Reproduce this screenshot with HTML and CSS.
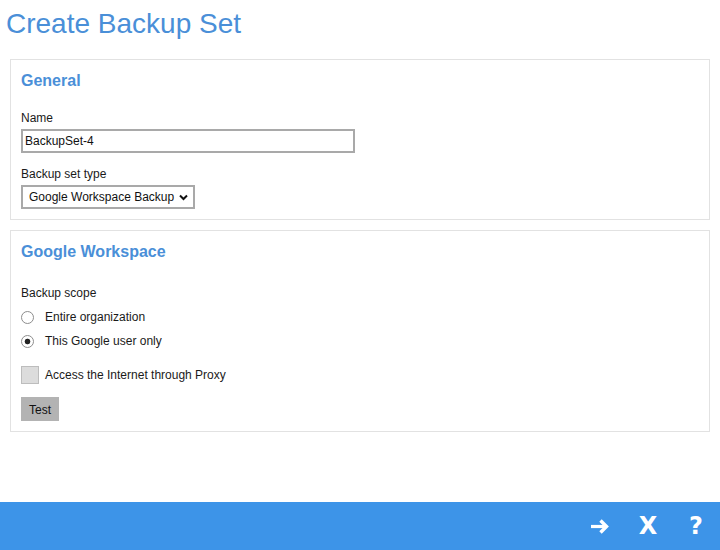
FILE: index.html
```html
<!DOCTYPE html>
<html lang="en">

<head>
    <meta charset="UTF-8">
    <meta name="viewport" content="width=device-width, initial-scale=1.0">
    <title>Create Backup Set</title>
    <link rel="stylesheet" href="styles.css">
</head>

<body>
    <div class="app">
        <div class="content">
            <h1 class="title">Create Backup Set</h1>

            <!-- general -->
            <div class="panel">
                <h3>General</h3>
                <label class="field-label" for="name">Name</label>
                <input type="text" id="name" class="text-input" value="BackupSet-4">
                <label class="field-label" for="type">Backup set type</label>
                <div class="select">
                    <select id="type">
                        <option>Google Workspace Backup</option>
                    </select>
                    <svg width="9" height="7" viewBox="0 0 9 7">
                        <polyline points="1,1.5 4.5,5 8,1.5" fill="none" stroke="#111" stroke-width="2" />
                    </svg>
                </div>
            </div>

            <!-- google workspace -->
            <div class="panel">
                <h3>Google Workspace</h3>
                <div class="field-label scope-label">Backup scope</div>
                <label class="check-row first">
                    <input type="radio" name="scope" class="radio">
                    <span>Entire organization</span>
                </label>
                <label class="check-row">
                    <input type="radio" name="scope" class="radio" checked>
                    <span>This Google user only</span>
                </label>
                <label class="check-row proxy">
                    <input type="checkbox" class="checkbox">
                    <span>Access the Internet through Proxy</span>
                </label>
                <button type="button" class="btn-test">Test</button>
            </div>
        </div>

        <!-- bottom bar -->
        <div class="footer">
            <span class="foot-icon">
                <svg width="20" height="15" viewBox="0 0 20 15">
                    <line x1="1" y1="7.5" x2="16" y2="7.5" stroke="#fff" stroke-width="3.2" />
                    <polyline points="10.5,1.5 16.5,7.5 10.5,13.5" fill="none" stroke="#fff" stroke-width="3.4" />
                </svg>
            </span>
            <span class="foot-icon">X</span>
            <span class="foot-icon">?</span>
        </div>
    </div>
</body>

</html>
```

FILE: styles.css
```css
* {
    box-sizing: border-box;
}

body {
    margin: 0;
    font-family: "Liberation Sans", Arial, sans-serif;
    font-size: 12px;
    color: #1a1a1a;
    background-color: #fff;
}

.app {
    display: flex;
    flex-direction: column;
    height: 100vh;
}

.title {
    margin: 8px 0 0 6px;
    font-size: 28px;
    line-height: 32px;
    font-weight: normal;
    color: #4a8fd8;
}

.panel {
    margin: 19px 10px 0;
    padding: 11px 10px 10px;
    border: 1px solid #e2e2e2;
}

.panel + .panel {
    margin-top: 10px;
}

h3 {
    margin: 0;
    font-size: 16px;
    line-height: 20px;
    color: #4a8fd8;
}

.field-label {
    display: block;
    margin-top: 19px;
    padding-top: 1px;
    line-height: 14px;
}

.field-label + .text-input,
.field-label + .select {
    margin-top: 4px;
}

.text-input + .field-label {
    margin-top: 13px;
}

.text-input {
    display: block;
    width: 334px;
    height: 24px;
    padding: 0 2px;
    border: 2px solid #a9a9a9;
    font-family: "Liberation Sans", Arial, sans-serif;
    font-size: 12px;
    color: #111;
    outline: none;
}

.select {
    display: flex;
    align-items: center;
    width: 174px;
    height: 24px;
    border: 2px solid #a9a9a9;
}

.select select {
    appearance: none;
    -webkit-appearance: none;
    border: none;
    background: none;
    padding: 0 0 0 6px;
    width: 153px;
    font-family: "Liberation Sans", Arial, sans-serif;
    font-size: 12px;
    color: #111;
    outline: none;
}

.select svg {
    margin-left: 3px;
}

.scope-label {
    margin-top: 23px;
}

.check-row {
    display: flex;
    align-items: center;
    gap: 11px;
    height: 24px;
    line-height: 14px;
}

.check-row.first {
    margin-top: 5px;
}

.check-row.proxy {
    margin-top: 10px;
    gap: 6px;
}

.radio {
    appearance: none;
    -webkit-appearance: none;
    width: 13px;
    height: 13px;
    margin: 0;
    border: 1px solid #8d8d8d;
    border-radius: 50%;
    background: #fff;
}

.radio:checked {
    background: radial-gradient(circle, #222 0, #222 2.5px, #fff 3.2px);
}

.checkbox {
    appearance: none;
    -webkit-appearance: none;
    width: 18px;
    height: 18px;
    margin: 0;
    border: 1px solid #bdbdbd;
    background: #dcdcdc;
}

.btn-test {
    display: block;
    margin-top: 10px;
    width: 38px;
    height: 24px;
    padding: 1px 0 0;
    border: none;
    background-color: #b3b3b3;
    font-family: "Liberation Sans", Arial, sans-serif;
    font-size: 12px;
    color: #111;
}

.footer {
    margin-top: auto;
    height: 48px;
    display: flex;
    justify-content: flex-end;
    align-items: center;
    background-color: #3d94e8;
}

.foot-icon {
    width: 48px;
    display: flex;
    justify-content: center;
    align-items: center;
    font-family: "DejaVu Sans", sans-serif;
    font-weight: bold;
    font-size: 24px;
    color: #fff;
}
```
